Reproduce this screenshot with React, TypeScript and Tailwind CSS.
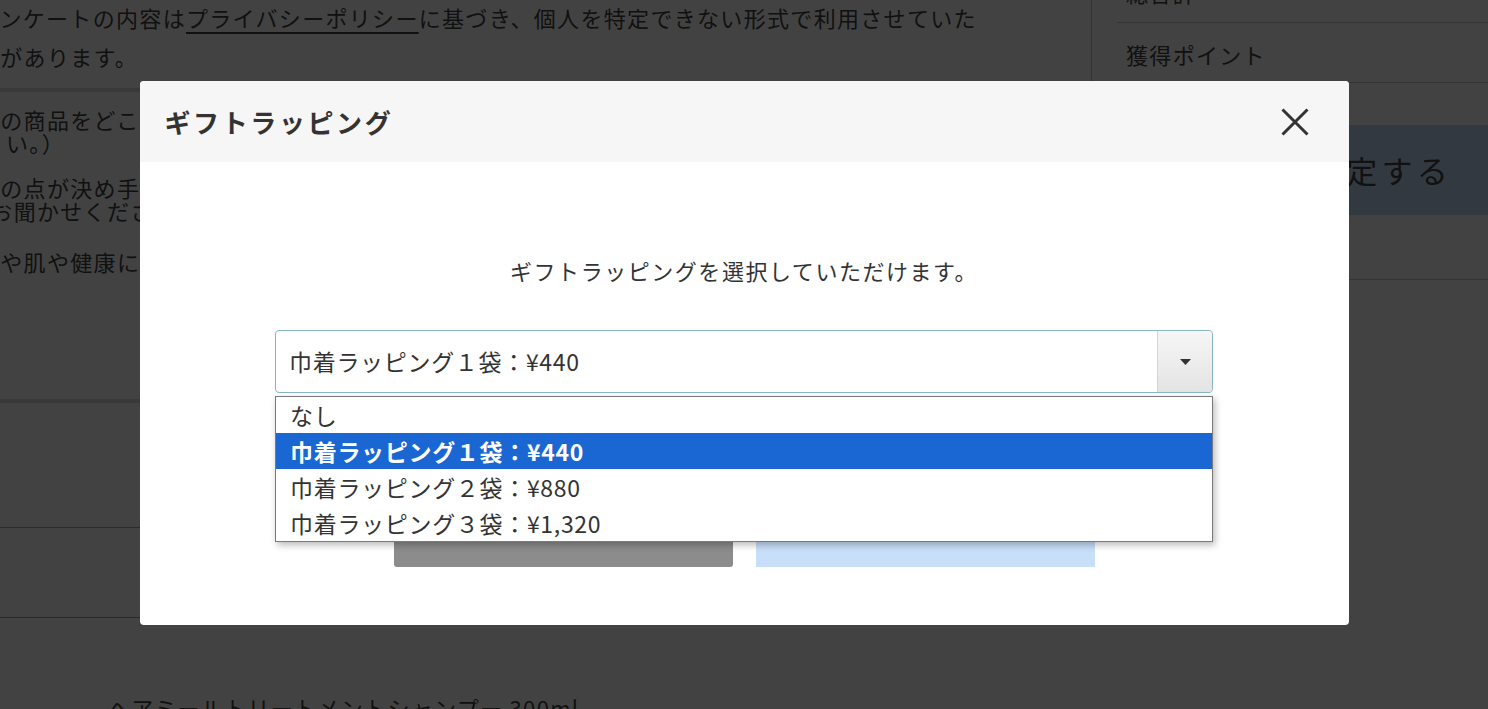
const wrapOptions = [
  { label: "なし", active: false },
  { label: "巾着ラッピング１袋：¥440", active: true },
  { label: "巾着ラッピング２袋：¥880", active: false },
  { label: "巾着ラッピング３袋：¥1,320", active: false },
];

function PageBehind() {
  return (
    <div className="flex h-[709px] w-[1488px] overflow-hidden bg-white text-[22px] tracking-[0.06em] text-[#444]">
      {/* main column */}
      <main className="w-[1091px] shrink-0 overflow-hidden">
        <div className="-mt-[2px] -ml-[93px] whitespace-nowrap leading-[39px]">
          <p>
            ※このアンケートの内容は<span className="underline underline-offset-[5px]">プライバシーポリシー</span>
            に基づき、個人を特定できない形式で利用させていた
          </p>
          <p>だく場合があります。</p>
        </div>

        <div className="mt-[12px] h-[315px] border-y-4 border-[#dadada] pt-[16px] leading-[23px] whitespace-nowrap">
          <p className="-ml-[93px]">Ｑ２．この商品をどこでお知りになりましたか？（当てはまるものを全てお選びくださ</p>
          <p className="pl-[6px]">い。）</p>
          <p className="mt-[22px] -ml-[93px]">Ｑ３．どの点が決め手となってご購入いただきましたか？具体的に</p>
          <p className="-ml-[33px]">をお聞かせください。</p>
          <p className="mt-[28px] -ml-[93px]">Ｑ４．髪や肌や健康についてのお悩みはございますか？</p>
        </div>

        <div className="mt-[124px] h-[90px] border-t border-[#a8a8a8]" />
        <div className="h-[74px] border-t border-[#a8a8a8]" />
        <p className="ml-[108px] whitespace-nowrap">ヘアミールトリートメントシャンプー 300ml</p>
      </main>

      {/* order summary */}
      <aside className="-mt-[37px] h-[330px] w-[557px] shrink-0 border-l border-[#c2c2c2] pl-[25px]">
        <div className="flex h-[60px] items-center border-b border-[#c8c8c8] pl-[9px]">総合計</div>
        <div className="flex h-[60px] items-center border-b border-[#c8c8c8] pl-[9px] pt-[4px]">獲得ポイント</div>
        <button className="mt-[42px] flex h-[90px] w-full items-center justify-center bg-[#c6ddf8] pr-[2px] text-[31px] tracking-[0.14em] text-[#444]">
          確定する
        </button>
        <div className="mt-[64px] border-t border-[#c8c8c8]" />
      </aside>
    </div>
  );
}

function GiftSelect() {
  return (
    <div className="relative mt-[44px] w-[938px]">
      <div className="flex h-[63px] rounded border border-[#86b8c2] bg-white">
        <div className="flex flex-1 items-center pl-[13px] text-[23px] tracking-[0.03em] text-[#333]">
          巾着ラッピング１袋：¥440
        </div>
        <div className="flex w-[55px] items-center justify-center rounded-r border-l border-[#d4d4d4] bg-gradient-to-b from-[#f6f6f6] to-[#e4e4e4]">
          <svg width="11" height="6" viewBox="0 0 11 6">
            <path d="M0 0h11L5.5 6z" fill="#333" />
          </svg>
        </div>
      </div>

      <ul className="absolute top-[66px] left-0 right-0 border border-[#7a7a7a] bg-white shadow-[2px_3px_7px_rgba(0,0,0,0.28)]">
        {wrapOptions.map((opt) => (
          <li
            key={opt.label}
            className={`flex h-[36px] items-center pl-[14px] text-[23px] tracking-[0.03em] ${
              opt.active ? "bg-[#1a66d2] font-semibold text-white" : "text-[#333]"
            }`}
          >
            {opt.label}
          </li>
        ))}
      </ul>
    </div>
  );
}

export default function App() {
  return (
    <div className="relative h-[709px] w-[1488px] overflow-hidden font-['Noto_Sans_CJK_JP','Noto_Sans',sans-serif]">
      <PageBehind />

      <div className="absolute inset-0 flex justify-center bg-[rgba(0,0,0,0.74)] pt-[81px]">
        <div className="flex h-[544px] w-[1209px] flex-col rounded bg-white">
          <div className="flex h-[81px] items-center justify-between rounded-t bg-[#f6f6f6] pl-[25px] pr-[40px]">
            <h2 className="text-[26px] font-bold tracking-[0.1em] text-[#333]">ギフトラッピング</h2>
            <button aria-label="閉じる" className="flex h-[28px] w-[28px] items-center justify-center">
              <svg width="28" height="28" viewBox="0 0 28 28">
                <path d="M1.5 1.5L26.5 26.5M26.5 1.5L1.5 26.5" stroke="#333" strokeWidth="3" />
              </svg>
            </button>
          </div>

          <div className="flex flex-col items-center pt-[92px]">
            <p className="text-[22px] leading-[32px] tracking-[0.07em] text-[#333]">
              ギフトラッピングを選択していただけます。
            </p>

            <GiftSelect />

            <div className="mt-[114px] flex gap-[23px]">
              <button className="h-[60px] w-[339px] rounded-[3px] bg-[#8c8c8c]" />
              <button className="h-[60px] w-[339px] bg-[#c8dffa]" />
            </div>
          </div>
        </div>
      </div>
    </div>
  );
}
